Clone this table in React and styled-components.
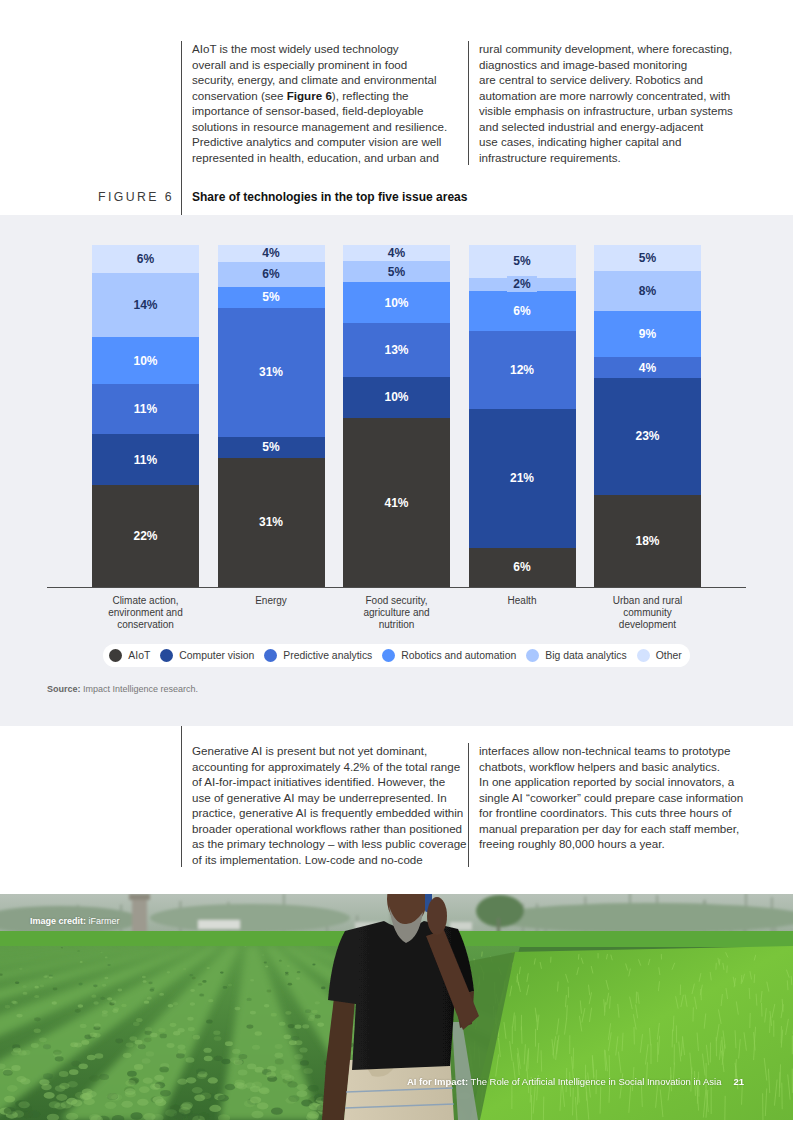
import React from "react";
import styled, { createGlobalStyle } from "styled-components";

const GlobalStyle = createGlobalStyle`
  html, body {
    margin: 0;
    padding: 0;
    background: #ffffff;
  }
  body {
    font-family: "Liberation Sans", Arial, sans-serif;
    color: #333333;
  }
`;

const COLORS = {
  aiot: "#3d3b39",
  vision: "#254a9b",
  predictive: "#416ed5",
  robotics: "#5391ff",
  bigdata: "#a9c7ff",
  other: "#d3e2ff"
};

const SERIES = [
  { key: "aiot", label: "AIoT", dark: true },
  { key: "vision", label: "Computer vision", dark: true },
  { key: "predictive", label: "Predictive analytics", dark: true },
  { key: "robotics", label: "Robotics and automation", dark: true },
  { key: "bigdata", label: "Big data analytics", dark: false },
  { key: "other", label: "Other", dark: false }
];

const CATEGORIES = [
  {
    name: ["Climate action,", "environment and", "conservation"],
    values: [22, 11, 11, 10, 14, 6]
  },
  { name: ["Energy"], values: [31, 5, 31, 5, 6, 4] },
  {
    name: ["Food security,", "agriculture and", "nutrition"],
    values: [41, 10, 13, 10, 5, 4]
  },
  { name: ["Health"], values: [6, 21, 12, 6, 2, 5] },
  {
    name: ["Urban and rural", "community", "development"],
    values: [18, 23, 4, 9, 8, 5]
  }
];

const INTRO_LEFT = [
  "AIoT is the most widely used technology",
  "overall and is especially prominent in food",
  "security, energy, and climate and environmental",
  <>
    conservation (see <b>Figure 6</b>), reflecting the
  </>,
  "importance of sensor-based, field-deployable",
  "solutions in resource management and resilience.",
  "Predictive analytics and computer vision are well",
  "represented in health, education, and urban and"
];

const INTRO_RIGHT = [
  "rural community development, where forecasting,",
  "diagnostics and image-based monitoring",
  "are central to service delivery. Robotics and",
  "automation are more narrowly concentrated, with",
  "visible emphasis on infrastructure, urban systems",
  "and selected industrial and energy-adjacent",
  "use cases, indicating higher capital and",
  "infrastructure requirements."
];

const OUTRO_LEFT = [
  "Generative AI is present but not yet dominant,",
  "accounting for approximately 4.2% of the total range",
  "of AI-for-impact initiatives identified. However, the",
  "use of generative AI may be underrepresented. In",
  "practice, generative AI is frequently embedded within",
  "broader operational workflows rather than positioned",
  "as the primary technology \u2013 with less public coverage",
  "of its implementation. Low-code and no-code"
];

const OUTRO_RIGHT = [
  "interfaces allow non-technical teams to prototype",
  "chatbots, workflow helpers and basic analytics.",
  "In one application reported by social innovators, a",
  "single AI \u201ccoworker\u201d could prepare case information",
  "for frontline coordinators. This cuts three hours of",
  "manual preparation per day for each staff member,",
  "freeing roughly 80,000 hours a year."
];

const App = () => (
  <>
    <GlobalStyle />
    <Page>
      <Intro>
        <span />
        <TextColumn>
          <Lines lines={INTRO_LEFT} />
        </TextColumn>
        <TextColumn>
          <Lines lines={INTRO_RIGHT} />
        </TextColumn>
        <FigureLabel>FIGURE 6</FigureLabel>
        <FigureTitle>Share of technologies in the top five issue areas</FigureTitle>
      </Intro>

      <FigureBand>
        <Bars>
          {CATEGORIES.map((cat, i) => (
            <Bar key={i}>
              {cat.values.map((v, j) => (
                <Segment key={j} $value={v} $color={COLORS[SERIES[j].key]}>
                  <SegmentLabel
                    $color={COLORS[SERIES[j].key]}
                    $dark={SERIES[j].dark}
                  >
                    {v}%
                  </SegmentLabel>
                </Segment>
              ))}
            </Bar>
          ))}
        </Bars>
        <CategoryRow>
          {CATEGORIES.map((cat, i) => (
            <CategoryName key={i}>
              {cat.name.map((line, k) => (
                <span key={k}>{line}</span>
              ))}
            </CategoryName>
          ))}
        </CategoryRow>
        <Legend>
          {SERIES.map((s) => (
            <LegendItem key={s.key}>
              <Dot $color={COLORS[s.key]} />
              {s.label}
            </LegendItem>
          ))}
        </Legend>
        <Source>
          <b>Source:</b> Impact Intelligence research.
        </Source>
      </FigureBand>

      <Outro>
        <span />
        <TextColumn $first>
          <Lines lines={OUTRO_LEFT} />
        </TextColumn>
        <TextColumn $second>
          <Lines lines={OUTRO_RIGHT} />
        </TextColumn>
      </Outro>

      <Photo>
        <FieldPicture />
        <Credit>
          <b>Image credit:</b> iFarmer
        </Credit>
        <Footer>
          <span>
            <b>AI for Impact:</b> The Role of Artificial Intelligence in Social
            Innovation in Asia
          </span>
          <PageNumber>21</PageNumber>
        </Footer>
      </Photo>
    </Page>
  </>
);

const Lines = ({ lines }) =>
  lines.map((line, i) => <Line key={i}>{line}</Line>);

// simple seeded random so the picture is the same on every run
const seeded = (seed) => {
  let s = seed;
  return () => {
    s = (s * 16807) % 2147483647;
    return (s - 1) / 2147483646;
  };
};

const FieldPicture = () => {
  const rnd = seeded(7);
  const vp = { x: 250, y: 30 };
  const top = 52;
  const t = (top - vp.y) / (226 - vp.y);
  const rows = [-1400, -1000, -700, -450, -240, -60, 110, 270, 420, 570, 720].map(
    (xb) => {
      const w = 50;
      const xt = vp.x + (xb - vp.x) * t;
      return `${xb - w},226 ${xb + w},226 ${xt + w * t},${top} ${xt - w * t},${top}`;
    }
  );
  const leaves = Array.from({ length: 460 }, () => {
    const y = top + Math.pow(rnd(), 0.7) * (226 - top);
    const x = rnd() * 470;
    const size = 0.8 + ((y - top) / (226 - top)) * 4;
    return { x, y, r: size, o: 0.2 + rnd() * 0.4, light: rnd() > 0.35 };
  });
  const blades = Array.from({ length: 260 }, () => {
    const y = 62 + rnd() * 170;
    const x = 470 + rnd() * 330;
    const len = 4 + ((y - 55) / 170) * 24;
    return { x, y, len, lean: (rnd() - 0.5) * 6 };
  });
  const trunks = Array.from({ length: 30 }, () => ({
    x: rnd() * 793,
    h: 18 + rnd() * 24
  }));

  return (
    <PictureSvg viewBox="0 0 793 226" preserveAspectRatio="none">
      <defs>
        <linearGradient id="sky" x1="0" y1="0" x2="0" y2="1">
          <stop offset="0" stopColor="#b7c2b8" />
          <stop offset="1" stopColor="#9aac9a" />
        </linearGradient>
        <linearGradient id="plants" x1="0" y1="0" x2="0" y2="1">
          <stop offset="0" stopColor="#5c9b46" />
          <stop offset="1" stopColor="#376a2e" />
        </linearGradient>
        <linearGradient id="rice" x1="0" y1="0" x2="1" y2="1">
          <stop offset="0" stopColor="#5ea932" />
          <stop offset="0.5" stopColor="#79c53b" />
          <stop offset="1" stopColor="#6cb636" />
        </linearGradient>
        <linearGradient id="shirt" x1="0" y1="0" x2="1" y2="0">
          <stop offset="0" stopColor="#1d1d1d" />
          <stop offset="1" stopColor="#0f0f0f" />
        </linearGradient>
        <linearGradient id="lungi" x1="0" y1="0" x2="1" y2="0">
          <stop offset="0" stopColor="#d6ccb3" />
          <stop offset="1" stopColor="#c6bca2" />
        </linearGradient>
        <clipPath id="leftField">
          <polygon points="0,52 520,52 475,226 0,226" />
        </clipPath>
        <filter id="haze">
          <feGaussianBlur stdDeviation="1.8" />
        </filter>
        <filter id="soft">
          <feGaussianBlur stdDeviation="0.7" />
        </filter>
        <filter id="rowBlur">
          <feGaussianBlur stdDeviation="3.5" />
        </filter>
        <filter id="body">
          <feGaussianBlur stdDeviation="0.5" />
        </filter>
      </defs>

      <rect x="0" y="0" width="793" height="226" fill="#467f36" />
      <rect x="0" y="0" width="793" height="42" fill="url(#sky)" />
      <g filter="url(#haze)">
        {trunks.map((tr, i) => (
          <rect key={i} x={tr.x} y={40 - tr.h} width="1.6" height={tr.h} fill="#8a9988" />
        ))}
        <ellipse cx="60" cy="26" rx="80" ry="14" fill="#8aa088" />
        <ellipse cx="250" cy="24" rx="100" ry="14" fill="#90a68e" />
        <ellipse cx="650" cy="24" rx="160" ry="15" fill="#8aa287" />
        <ellipse cx="500" cy="17" rx="24" ry="16" fill="#5d8055" />
        <rect x="497" y="24" width="3" height="18" fill="#6a7a60" />
        <rect x="132" y="2" width="15" height="38" fill="#9d9a8f" />
        <rect x="129" y="0" width="21" height="6" fill="#8c897d" />
        <rect x="198" y="26" width="42" height="9" fill="#d9dcd7" />
        <rect x="355" y="28" width="30" height="8" fill="#c8cec6" />
        <rect x="450" y="28" width="22" height="8" fill="#cdd2cb" />
      </g>

      <rect x="0" y="37" width="793" height="16" fill="#5ba83a" />

      <g clipPath="url(#leftField)">
        <rect x="0" y="52" width="520" height="174" fill="url(#plants)" />
        <g filter="url(#rowBlur)">
          {rows.map((p, i) => (
            <polygon key={i} points={p} fill="#6aa94f" opacity="0.9" />
          ))}
        </g>
        <g filter="url(#soft)">
          {leaves.map((l, i) => (
            <ellipse
              key={i}
              cx={l.x}
              cy={l.y}
              rx={l.r * 1.3}
              ry={l.r * 0.8}
              fill={l.light ? "#84bd62" : "#34652d"}
              opacity={l.o}
            />
          ))}
        </g>
      </g>

      <polygon points="512,58 793,52 793,226 470,226" fill="url(#rice)" />
      <g opacity="0.5">
        {blades.map((b, i) => (
          <line
            key={i}
            x1={b.x}
            y1={b.y}
            x2={b.x + b.lean}
            y2={b.y - b.len}
            stroke="#a5e06a"
            strokeWidth="0.8"
          />
        ))}
      </g>
      <polygon points="455,70 515,58 480,226 440,226" fill="#4d8634" opacity="0.9" />
      <polygon points="452,128 462,128 478,226 458,226" fill="#93a398" opacity="0.85" />

      <g filter="url(#body)">
        {/* hanging arm */}
        <path d="M334 104 L355 104 L350 170 L344 226 L322 226 L326 170 Z" fill="#4b3023" />
        {/* lungi */}
        <path d="M350 166 L450 162 L454 226 L344 226 Z" fill="url(#lungi)" />
        <path d="M346 198 L453 194" stroke="#7f9cbc" strokeWidth="1.3" opacity="0.8" />
        <path d="M345 214 L454 210" stroke="#7f9cbc" strokeWidth="1.3" opacity="0.8" />
        <path d="M362 166 Q378 160 396 170 Q388 186 372 182 Z" fill="#c4b99c" />
        {/* neck */}
        <rect x="397" y="10" width="20" height="24" fill="#4b3023" />
        {/* shirt */}
        <path
          d="M384 27 Q404 40 424 27 L458 35 Q470 60 474 97 L455 102 L450 172 L352 176 L356 110 L328 106 Q332 60 345 37 Z"
          fill="url(#shirt)"
        />
        {/* raised arm */}
        <path d="M455 102 L474 97 L472 130 L460 134 Z" fill="#4b3023" />
        <path d="M426 42 L444 36 L479 122 L463 136 Z" fill="#523427" />
        {/* head */}
        <ellipse cx="407" cy="5" rx="20" ry="27" fill="#5a3a29" />
        <path
          d="M389 12 Q393 42 406 49 Q419 44 423 18 Q414 31 405 30 Q395 30 389 12 Z"
          fill="#88877f"
        />
        <rect x="425" y="-2" width="7" height="20" rx="2" fill="#2b4f93" />
        <ellipse cx="437" cy="22" rx="10" ry="19" fill="#573829" />
      </g>
    </PictureSvg>
  );
};

const Page = styled.div`
  width: 793px;
  display: flex;
  flex-direction: column;
`;

const Intro = styled.section`
  display: grid;
  grid-template-columns: 181px 287px 1fr;
  padding-top: 41px;
`;

const TextColumn = styled.div`
  border-left: 1px solid #4a4a4a;
  padding-left: 10px;
  margin-top: ${({ $second }) => ($second ? "17px" : "0")};
  padding-top: ${({ $first }) => ($first ? "17px" : "0")};
  font-size: 11.6px;
  line-height: 15.5px;
  color: #363636;
`;

const Line = styled.span`
  display: block;
  white-space: nowrap;

  b {
    font-weight: 700;
    color: #1a1a1a;
  }
`;

const FigureLabel = styled.div`
  text-align: right;
  padding: 26px 7px 11px 0;
  font-size: 12.3px;
  letter-spacing: 2.4px;
  line-height: 13px;
  color: #3a3a3a;
`;

const FigureTitle = styled.h2`
  grid-column: 2 / span 2;
  margin: 0;
  border-left: 1px solid #4a4a4a;
  padding: 26px 0 11px 10px;
  font-size: 12px;
  line-height: 13px;
  font-weight: 700;
  color: #111111;
`;

const FigureBand = styled.section`
  background: #eff0f4;
  padding: 30px 47px 31px;
  display: flex;
  flex-direction: column;
`;

const Bars = styled.div`
  display: grid;
  grid-template-columns: repeat(5, 107px);
  justify-content: center;
  column-gap: 18.5px;
  height: 342px;
  border-bottom: 1px solid #4d4d4d;
`;

const Bar = styled.div`
  display: flex;
  flex-direction: column-reverse;
`;

const Segment = styled.div`
  flex: ${({ $value }) => $value} 1 0;
  min-height: 0;
  background: ${({ $color }) => $color};
  display: flex;
  align-items: center;
  justify-content: center;
`;

const SegmentLabel = styled.span`
  position: relative;
  z-index: 1;
  padding: 2px 6px 1px;
  background: ${({ $color }) => $color};
  font-size: 12px;
  line-height: 13px;
  font-weight: 700;
  color: ${({ $dark }) => ($dark ? "#ffffff" : "#1d3264")};
`;

const CategoryRow = styled.div`
  display: grid;
  grid-template-columns: repeat(5, 107px);
  justify-content: center;
  column-gap: 18.5px;
  margin-top: 7px;
`;

const CategoryName = styled.div`
  display: flex;
  flex-direction: column;
  align-items: center;
  font-size: 10px;
  line-height: 12px;
  color: #3a3a3a;
  white-space: nowrap;
`;

const Legend = styled.ul`
  list-style: none;
  margin: 13px auto 0;
  padding: 0 8px 0 6px;
  height: 23px;
  display: flex;
  align-items: center;
  gap: 10px;
  background: #ffffff;
  border-radius: 12px;
`;

const LegendItem = styled.li`
  display: flex;
  align-items: center;
  gap: 6px;
  font-size: 10.4px;
  color: #3a3a3a;
  white-space: nowrap;
`;

const Dot = styled.span`
  width: 13px;
  height: 13px;
  border-radius: 50%;
  background: ${({ $color }) => $color};
  flex-shrink: 0;
`;

const Source = styled.p`
  margin: 17px 0 0;
  font-size: 9px;
  line-height: 11px;
  color: #777777;

  b {
    color: #666666;
  }
`;

const Outro = styled.section`
  display: grid;
  grid-template-columns: 181px 287px 1fr;
  padding-bottom: 27px;
`;

const Photo = styled.div`
  position: relative;
  height: 226px;
  overflow: hidden;
`;

const PictureSvg = styled.svg`
  display: block;
  width: 100%;
  height: 100%;
`;

const Credit = styled.div`
  position: absolute;
  left: 30px;
  top: 22px;
  font-size: 9px;
  line-height: 11px;
  color: #ffffff;
  text-shadow: 0 0 2px rgba(0, 0, 0, 0.25);
`;

const Footer = styled.div`
  position: absolute;
  right: 49px;
  bottom: 33px;
  display: flex;
  gap: 12px;
  font-size: 9.5px;
  line-height: 11px;
  color: #ffffff;
  text-shadow: 0 0 2px rgba(0, 0, 0, 0.3);
  white-space: nowrap;
`;

const PageNumber = styled.b`
  font-weight: 700;
`;

export default App;
